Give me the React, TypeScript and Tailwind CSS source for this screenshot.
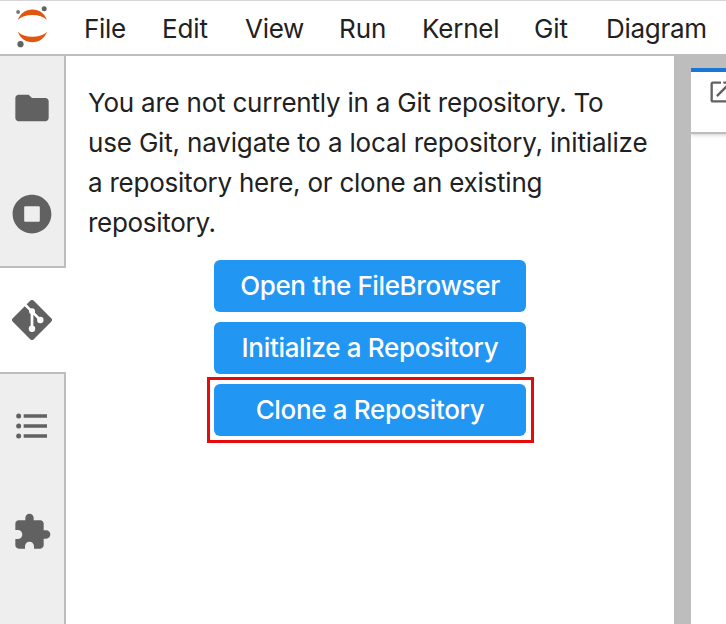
import type { ReactNode } from "react";

const menus = [
  { label: "File", cls: "w-[78px] tracking-[-0.3px]" },
  { label: "Edit", cls: "w-[83px] tracking-[-0.1px]" },
  { label: "View", cls: "w-[94px] tracking-[-0.3px]" },
  { label: "Run", cls: "w-[83px] tracking-[-0.1px]" },
  { label: "Kernel", cls: "w-[112px] tracking-[-0.2px]" },
  { label: "Git", cls: "w-[72px] tracking-[-0.1px]" },
  { label: "Diagram", cls: "tracking-[-0.3px]" },
];

const lines = [
  { text: "You are not currently in a Git repository. To", cls: "tracking-[-0.22px]" },
  { text: "use Git, navigate to a local repository, initialize", cls: "tracking-[-0.17px]" },
  { text: "a repository here, or clone an existing", cls: "tracking-[-0.23px]" },
  { text: "repository.", cls: "tracking-[-0.3px]" },
];

function Icon({ d, viewBox = "0 0 24 24" }: { d: string; viewBox?: string }) {
  return (
    <svg viewBox={viewBox} className="size-10 fill-[#616161]">
      <path d={d} />
    </svg>
  );
}

function GitIcon() {
  return (
    <svg viewBox="0 0 40 40" className="size-10">
      <path
        fill="#616161"
        d="M18.200 .8a2.560 2.560 0 0 1 3.600 0L39.200 18.200a2.560 2.560 0 0 1 0 3.600L21.800 39.200a2.560 2.560 0 0 1-3.600 0L.8 21.800a2.560 2.560 0 0 1 0-3.600z"
      />
      <path fill="none" stroke="#fff" strokeWidth="2.700" d="M12 3.600L28 19.600M20 11V28" />
      <g fill="#fff">
        <circle cx="20" cy="11.200" r="3" />
        <circle cx="28.300" cy="20" r="3.200" />
        <circle cx="20" cy="28.700" r="3.200" />
      </g>
    </svg>
  );
}

function Logo() {
  return (
    <svg viewBox="0 0 64 54" className="h-[54px] w-16 shrink-0">
      <path fill="#e0560f" d="M17.8 20C20.2 13.3 25.8 9.4 32.4 9.4S44.6 13.3 47 20C43.6 16.8 38.5 15 32.4 15S21.2 16.8 17.8 20z" />
      <path fill="#e0560f" d="M17.8 31.8C20.2 38.5 25.8 42.2 32.4 42.2S44.6 38.5 47 31.8C43.6 35 38.5 36.8 32.4 36.8S21.2 35 17.8 31.8z" />
      <circle cx="18.1" cy="12" r="1.9" fill="#767677" />
      <circle cx="44.2" cy="8.8" r="2.5" fill="#616262" />
      <circle cx="20.5" cy="44.2" r="3.1" fill="#616262" />
    </svg>
  );
}

function ActionButton({ children }: { children: ReactNode }) {
  return (
    <button className="flex h-[52px] w-[312px] shrink-0 items-center justify-center rounded-[6px] bg-[#2196f3] pb-0.5 text-[26px] font-medium whitespace-nowrap text-white">
      {children}
    </button>
  );
}

export default function App() {
  return (
    <div className="flex h-[624px] w-[726px] flex-col overflow-hidden bg-white font-['Inter','Liberation_Sans',sans-serif] text-[#212121]">
      <header className="flex h-14 shrink-0 items-start border-t border-b-2 border-t-[#d6d6d6] border-b-[#bdbdbd]">
        <div className="-mt-px">
          <Logo />
        </div>
        <nav className="flex pt-2 pl-5 text-[26px] leading-10">
          {menus.map((m) => (
            <span key={m.label} className={`shrink-0 ${m.cls}`}>
              {m.label}
            </span>
          ))}
        </nav>
      </header>

      <div className="flex min-h-0 flex-1">
        <aside className="flex w-[66px] shrink-0 flex-col">
          <div className="flex h-[212px] flex-col border-r-2 border-b-2 border-[#bdbdbd] bg-[#eeeeee]">
            <div className="flex h-[104px] items-center justify-center">
              <Icon d="M10 4H4c-1.1 0-1.99.9-1.99 2L2 18c0 1.1.9 2 2 2h16c1.1 0 2-.9 2-2V8c0-1.100-.9-2-2-2h-8l-2-2z" />
            </div>
            <div className="flex h-[106px] shrink-0 items-center justify-center pt-0.5">
              <Icon
                viewBox="0 0 512 512"
                d="M256 8C119 8 8 119 8 256s111 248 248 248 248-111 248-248S393 8 256 8zm100 332c0 8.800-7.200 16-16 16H172c-8.800 0-16-7.200-16-16V172c0-8.800 7.200-16 16-16h168c8.800 0 16 7.200 16 16v168z"
              />
            </div>
          </div>
          <div className="flex h-[104px] w-16 items-center justify-center">
            <GitIcon />
          </div>
          <div className="flex flex-1 flex-col border-t-2 border-r-2 border-[#bdbdbd] bg-[#eeeeee]">
            <div className="flex h-[104px] items-center justify-center">
              <Icon d="M7 5H21V7H7V5M7 13V11H21V13H7M4 4.500A1.500 1.500 0 0 1 5.500 6A1.500 1.500 0 0 1 4 7.500A1.500 1.500 0 0 1 2.500 6A1.500 1.500 0 0 1 4 4.500M4 10.500A1.500 1.500 0 0 1 5.500 12A1.500 1.500 0 0 1 4 13.500A1.500 1.500 0 0 1 2.500 12A1.500 1.500 0 0 1 4 10.500M7 19V17H21V19H7M4 16.500A1.500 1.500 0 0 1 5.500 18A1.500 1.500 0 0 1 4 19.500A1.500 1.500 0 0 1 2.500 18A1.500 1.500 0 0 1 4 16.500" />
            </div>
            <div className="flex h-[108px] items-center justify-center">
              <Icon d="M20.500 11H19V7c0-1.100-.9-2-2-2h-4V3.500C13 2.120 11.880 1 10.500 1S8 2.120 8 3.500V5H4c-1.100 0-1.990.9-1.990 2v3.800H3.500c1.490 0 2.700 1.210 2.700 2.700s-1.210 2.700-2.700 2.700H2V20c0 1.100.9 2 2 2h3.800v-1.500c0-1.490 1.210-2.700 2.700-2.700 1.490 0 2.700 1.210 2.700 2.700V22H17c1.100 0 2-.9 2-2v-4h1.500c1.380 0 2.500-1.120 2.500-2.500S21.880 11 20.500 11z" />
            </div>
          </div>
        </aside>

        <main className="flex w-[608px] shrink-0 flex-col">
          <p className="pt-[27px] pl-[22px] text-[26px] leading-10 whitespace-nowrap">
            {lines.map((l) => (
              <span key={l.text} className={`block w-fit ${l.cls}`}>
                {l.text}
              </span>
            ))}
          </p>
          <div className="ml-[141px] flex w-[327px] flex-col items-start pt-[17px]">
            <div className="flex flex-col gap-2.5 pl-[7px]">
              <ActionButton>
                <span className="tracking-[-0.37px]">Open the FileBrowser</span>
              </ActionButton>
              <ActionButton>
                <span className="tracking-[-0.33px]">Initialize a Repository</span>
              </ActionButton>
            </div>
            <div className="mt-[3px] flex h-[66px] w-[327px] border-3 border-[#e60b0b] pt-1 pl-1">
              <ActionButton>
                <span className="tracking-[-0.33px]">Clone a Repository</span>
              </ActionButton>
            </div>
          </div>
        </main>

        <section className="flex flex-1 flex-col bg-[#bdbdbd] pt-3 pl-[17px]">
          <div className="flex flex-1 flex-col overflow-hidden bg-white">
            <div className="h-[66px] shrink-0 overflow-hidden border-t-4 border-b-2 border-t-[#1976d2] border-b-[#bdbdbd] bg-white pt-1.5 pl-4 shadow-[0_1px_4px_rgba(0,0,0,0.2)]">
              <svg viewBox="0 0 24 24" className="size-7 max-w-none fill-[#616161]">
                <path d="M19 19H5V5h7V3H5c-1.110 0-2 .9-2 2v14c0 1.100.890 2 2 2h14c1.100 0 2-.9 2-2v-7h-2v7zM14 3v2h3.590l-9.830 9.830 1.410 1.410L19 6.410V10h2V3h-7z" />
              </svg>
            </div>
          </div>
        </section>
      </div>
    </div>
  );
}
